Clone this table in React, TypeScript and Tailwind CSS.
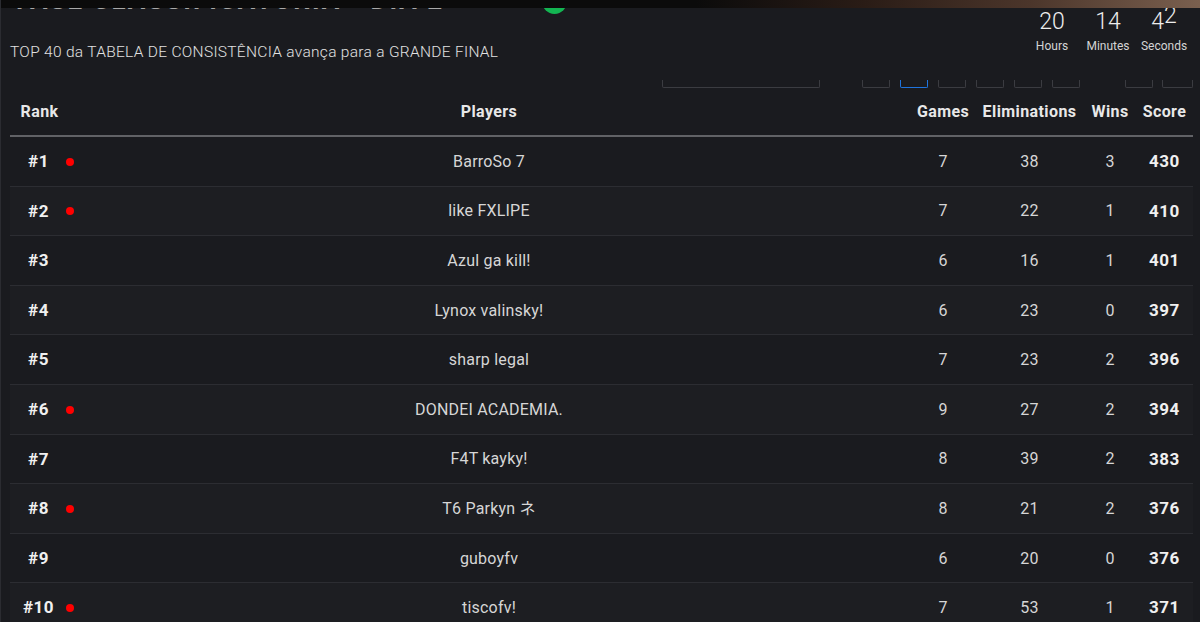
import React from "react";

const rows = [
  { rank: 1, dot: true, name: "BarroSo 7", games: 7, elim: 38, wins: 3, score: 430 },
  { rank: 2, dot: true, name: "like FXLIPE", games: 7, elim: 22, wins: 1, score: 410 },
  { rank: 3, dot: false, name: "Azul ga kill!", games: 6, elim: 16, wins: 1, score: 401 },
  { rank: 4, dot: false, name: "Lynox valinsky!", games: 6, elim: 23, wins: 0, score: 397 },
  { rank: 5, dot: false, name: "sharp legal", games: 7, elim: 23, wins: 2, score: 396 },
  { rank: 6, dot: true, name: "DONDEI ACADEMIA.", games: 9, elim: 27, wins: 2, score: 394 },
  { rank: 7, dot: false, name: "F4T kayky!", games: 8, elim: 39, wins: 2, score: 383 },
  { rank: 8, dot: true, name: "T6 Parkyn ネ", games: 8, elim: 21, wins: 2, score: 376 },
  { rank: 9, dot: false, name: "guboyfv", games: 6, elim: 20, wins: 0, score: 376 },
  { rank: 10, dot: true, name: "tiscofv!", games: 7, elim: 53, wins: 1, score: 371 },
];

const cols = "grid grid-cols-[57px_1fr_64px_109px_52px_57px]";

export default function App() {
  return (
    <div
      className="relative h-[622px] w-[1200px] overflow-hidden bg-[#1a1b1f] border-l border-[#2b2c31] text-[#d6d6d6]"
      style={{ fontFamily: "Roboto, 'Noto Sans CJK JP', sans-serif" }}
    >
      {/* top strip overlay */}
      <div className="absolute left-0 top-0 z-10 h-[8px] w-full bg-[linear-gradient(to_right,#0b0b0b_0%,#0b0b0b_58%,#2a1c16_72%,#4c362b_86%,#7a604f_100%)]" />
      {/* green status dot overlay */}
      <div className="absolute left-[541px] top-[-11px] z-[5] h-[25px] w-[25px] rounded-full bg-[#13b552]" />

      {/* header section */}
      <div className="flex h-[80px]">
        <div className="flex-1 pl-[9px]">
          <div className="-mt-[13px] ml-[6px] h-[26px] whitespace-nowrap text-[26px] font-bold leading-[26px] tracking-[2px] text-[#a9a9a9]">
            FASE CLASSIFICATÓRIA - DIA 2
          </div>
          <div className="mt-[29px] text-[15.5px] font-light leading-[20px] tracking-[0.3px] text-[#e2e2e2]">
            TOP 40 da TABELA DE CONSISTÊNCIA avança para a GRANDE FINAL
          </div>
        </div>
        <div className="flex pr-[8px] pt-[10px]">
          {[
            { v: "20", l: "Hours" },
            { v: "14", l: "Minutes" },
          ].map((u) => (
            <div key={u.l} className="flex w-[56px] flex-col items-center">
              <div className="text-[23px] font-light leading-[24px] text-[#ededed]">{u.v}</div>
              <div className="mt-[5px] text-[12px] leading-[14px] text-[#d4d4d4]">{u.l}</div>
            </div>
          ))}
          <div className="flex w-[56px] flex-col items-center">
            <div className="text-[23px] font-light leading-[24px] text-[#ededed]">
              4<span className="relative -top-[6px]">2</span>
            </div>
            <div className="mt-[5px] text-[12px] leading-[14px] text-[#d4d4d4]">Seconds</div>
          </div>
        </div>
      </div>

      {/* controls row (bottoms visible) */}
      <div className="flex h-[8px] justify-end pr-[7px]">
        <div className="mr-[42px] h-full w-[158px] rounded-b-[2px] border-x border-b border-[#3b3c41]" />
        <div className="flex gap-[10px]">
          {[0, 1, 2, 3, 4, 5].map((i) => (
            <div
              key={i}
              className={
                i === 1
                  ? "h-full w-[28px] rounded-b-[2px] border-x border-b border-[#1f74de]"
                  : "h-full w-[28px] rounded-b-[2px] border-x border-b border-[#3b3c41]"
              }
            />
          ))}
        </div>
        <div className="ml-[45px] flex gap-[9px]">
          <div className="h-full w-[28px] rounded-b-[2px] border-x border-b border-[#3b3c41]" />
          <div className="h-full w-[31px] rounded-b-[2px] border-x border-b border-[#3b3c41]" />
        </div>
      </div>

      {/* table */}
      <div className="ml-[9px] mr-[7px]">
        <div className={`${cols} h-[49px] items-center border-b-2 border-[#616266] pt-[1px] text-[16px] font-bold tracking-[0.4px] text-[#e8e8e8]`}>
          <div className="pl-[2px] text-center">Rank</div>
          <div className="text-center">Players</div>
          <div className="text-center">Games</div>
          <div className="text-center">Eliminations</div>
          <div className="text-center">Wins</div>
          <div className="text-center">Score</div>
        </div>
        {rows.map((r) => (
          <div
            key={r.rank}
            className={`${cols} h-[49.6px] items-center border-b border-[#2c2d32] pt-[1px] text-[16px] tracking-[0.2px] odd:bg-[#1d1e22]`}
          >
            <div className="relative text-center text-[17px] font-bold tracking-[0.5px] text-[#f0f0f0]">
              #{r.rank}
              {r.dot && (
                <span className="absolute left-[56px] top-1/2 h-[8px] w-[8px] -translate-y-1/2 rounded-full bg-[#ff0000]" />
              )}
            </div>
            <div className="text-center text-[#d6d6d6]">{r.name}</div>
            <div className="text-center text-[#d6d6d6]">{r.games}</div>
            <div className="text-center text-[#d6d6d6]">{r.elim}</div>
            <div className="text-center text-[#d6d6d6]">{r.wins}</div>
            <div className="text-center text-[17px] font-bold tracking-[0.5px] text-[#f0f0f0]">{r.score}</div>
          </div>
        ))}
      </div>
    </div>
  );
}
